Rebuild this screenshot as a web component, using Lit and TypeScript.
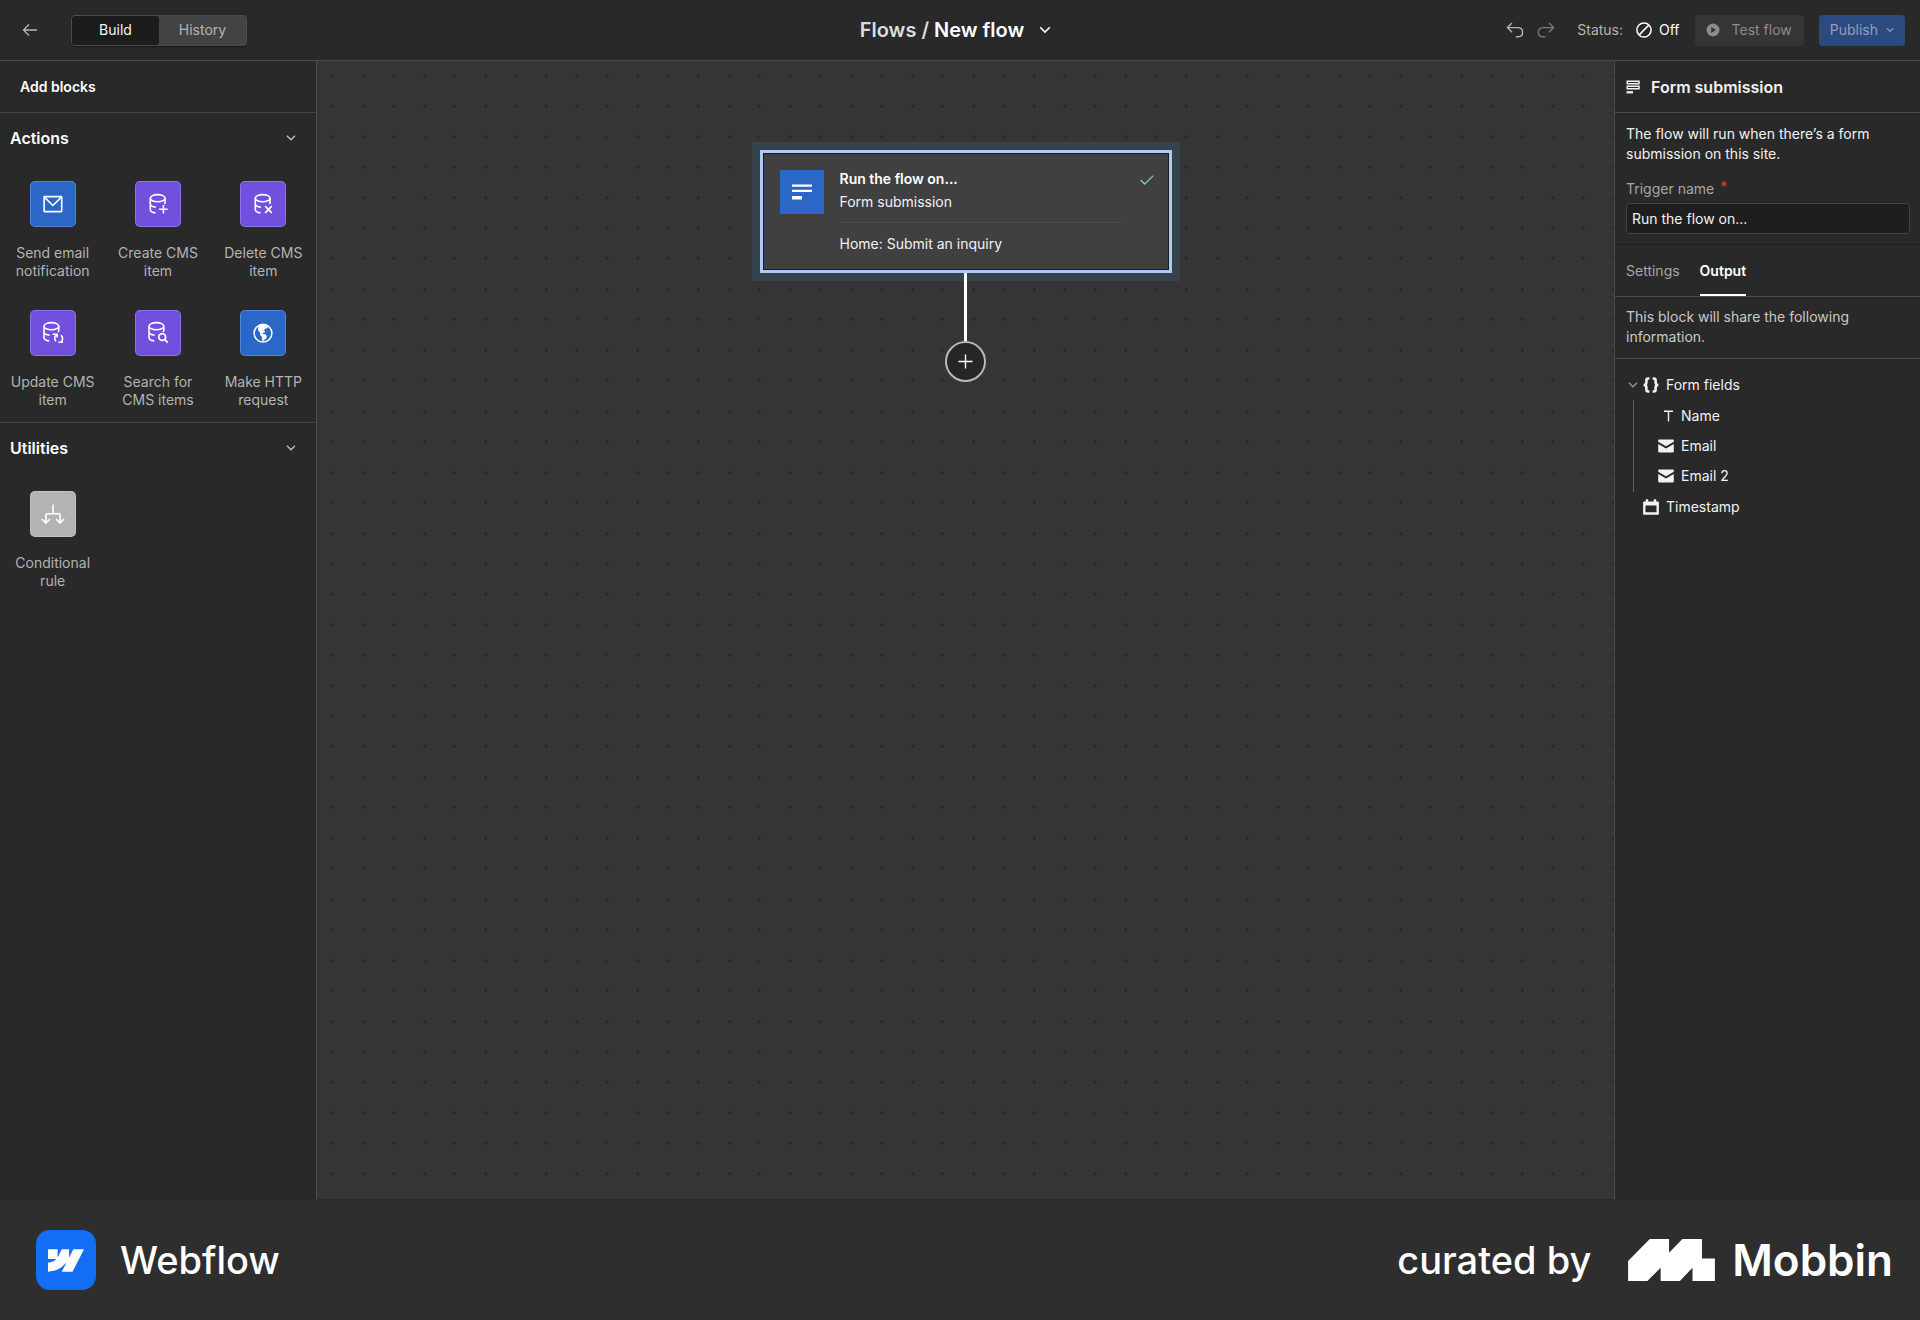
import { LitElement, html, css, svg, type TemplateResult } from "lit";
import { customElement, property, state } from "lit/decorators.js";
import { classMap } from "lit/directives/class-map.js";

const database = svg`
  <ellipse cx="11.7" cy="6.2" rx="7.4" ry="3.6" />
  <path d="M4.3 6.2v11.2c0 1.7 2.2 3 5.2 3.5M4.3 11.9c0 1.6 2.2 2.8 5.6 3.3M19.1 6.2v4.2c0 .5-.3 1-.9 1.5" />`;

const icons: Record<string, TemplateResult> = {
  back: html`<svg width="16" height="14" viewBox="0 0 16 14" fill="none" stroke="currentColor" stroke-width="1.3">
    <path d="M7 1.5 1.5 7 7 12.5M1.5 7H15" /></svg>`,
  chevron: html`<svg width="10" height="6" viewBox="0 0 10 6" fill="none" stroke="currentColor" stroke-width="1.3">
    <path d="M1 .8 5 4.8 9 .8" /></svg>`,
  undo: html`<svg width="18" height="18" viewBox="0 0 18 18" fill="none" stroke="currentColor" stroke-width="1.4">
    <path d="M6 2 1.4 6.6 6 11.2M1.4 6.6h10c3.2 0 5.2 1.9 5.2 4.6s-2 4.6-5.2 4.6H9.8" /></svg>`,
  redo: html`<svg width="18" height="18" viewBox="0 0 18 18" fill="none" stroke="currentColor" stroke-width="1.4">
    <path d="M12 2l4.6 4.6L12 11.2M16.6 6.6h-10c-3.2 0-5.2 1.9-5.2 4.6s2 4.6 5.2 4.6h1.6" /></svg>`,
  off: html`<svg width="16" height="16" viewBox="0 0 16 16" fill="none" stroke="currentColor" stroke-width="1.5">
    <circle cx="8" cy="8" r="7.1" /><path d="M3.4 12.6 12.6 3.4" /></svg>`,
  play: html`<svg width="14" height="14" viewBox="0 0 14 14" fill="currentColor">
    <path fill-rule="evenodd" d="M7 .5a6.5 6.5 0 1 1 0 13a6.5 6.5 0 0 1 0-13zM5.2 3.9v6.2L10 7z" /></svg>`,
  mail: html`<svg width="24" height="24" viewBox="0 0 24 24" fill="none" stroke="currentColor" stroke-width="1.6">
    <rect x="3.1" y="4.6" width="17.6" height="15" rx=".6" /><path d="M3.4 5.1l8.5 8.4 8.5-8.4" /></svg>`,
  dbAdd: html`<svg width="24" height="24" viewBox="0 0 24 24" fill="none" stroke="currentColor" stroke-width="1.6">
    ${database}<path d="M17.4 13v8.6M13.1 17.3h8.6" /></svg>`,
  dbDelete: html`<svg width="24" height="24" viewBox="0 0 24 24" fill="none" stroke="currentColor" stroke-width="1.6">
    ${database}<path d="M14.2 14.2l6.6 6.6M20.8 14.2l-6.6 6.6" stroke-width="1.8" /></svg>`,
  dbUpdate: html`<svg width="24" height="24" viewBox="0 0 24 24" fill="none" stroke="currentColor" stroke-width="1.6">
    <g transform="translate(-1.3 -1)">${database}</g>
    <path d="M11.6 13.2h4.6v3.4M15.400 14c-2 1.600-2.300 4.200-.5 6.200M22 21.200h-4.600M20.200 21c1.900-1.800 1.900-4.900-.2-6.800" /></svg>`,
  dbSearch: html`<svg width="24" height="24" viewBox="0 0 24 24" fill="none" stroke="currentColor" stroke-width="1.6">
    <g transform="translate(-1.3 -1)">${database}</g>
    <circle cx="16.2" cy="16" r="3.4" stroke-width="1.8" /><path d="M18.6 18.4l3.200 3.200" stroke-width="1.8" /></svg>`,
  globe: html`<svg width="24" height="24" viewBox="0 0 24 24" fill="none" stroke="currentColor" stroke-width="1.5">
    <circle cx="12" cy="12.2" r="8.9" />
    <path fill="currentColor" stroke="none" d="M7.600 4.900c2.200-1.600 5.800-2 8.800-.8l1 1.900-1.500 1.400-1.700.2-1.300 1.600 1.300 1-1 1.500-1.700.3.300 1 2.600.2 1.500 1.700-.7 2.500-1.900 1.500-1.200 1.700-1.200-2.100v-2.700l-1.800-1.900.100-2.200-1.900-1.900-.4-2.600z" /></svg>`,
  branch: html`<svg width="24" height="24" viewBox="0 0 24 24" fill="none" stroke="currentColor" stroke-width="1.6">
    <path d="M12 2.600v9.100M4.900 21v-7.700c0-1 .6-1.600 1.600-1.600h11c1 0 1.600.6 1.600 1.600V21M.9 17l4 4 4-4M15.100 17l4 4 4-4" /></svg>`,
  formOutline: html`<svg width="14" height="14" viewBox="0 0 14 14" fill="none" stroke="currentColor" stroke-width="1.4">
    <path d="M1.200 1.200h11.800v2.600H1.200zM1.200 6.200h11.800v2.600H1.200z" /><path d="M.5 12.300h6.500" stroke-width="2.200" /></svg>`,
  check: html`<svg width="14" height="10" viewBox="0 0 14 10" fill="none" stroke="currentColor" stroke-width="1.3">
    <path d="M.7 5l4 4L13.300.6" /></svg>`,
  plus: html`<svg width="15" height="15" viewBox="0 0 15 15" fill="none" stroke="currentColor" stroke-width="1.4">
    <path d="M7.500.5v14M.5 7.500h14" /></svg>`,
  braces: html`<svg width="16" height="16" viewBox="0 0 16 16" fill="none" stroke="currentColor" stroke-width="2.6">
    <path d="M6.400 1.500H5.200C4 1.500 3.400 2.100 3.400 3.200v2.200C3.400 7 2.500 8 .6 8c1.900 0 2.800 1 2.800 2.600v2.200c0 1.100.6 1.700 1.800 1.700h1.200M9.600 1.500h1.200c1.200 0 1.800.6 1.800 1.700v2.200c0 1.600.9 2.600 2.800 2.600-1.900 0-2.800 1-2.800 2.600v2.200c0 1.100-.6 1.700-1.800 1.700H9.600" /></svg>`,
  text: html`<svg width="16" height="16" viewBox="0 0 16 16" fill="none" stroke="currentColor" stroke-width="1.4">
    <path d="M6 3.300h9M10.500 3.300v10.200" /></svg>`,
  envelope: html`<svg width="16" height="16" viewBox="0 0 16 16" fill="currentColor">
    <path d="M1 1.600h14a.8.8 0 0 1 .8.800v1.300L8 8.300.2 3.700V2.400a.8.800 0 0 1 .8-.8zM.2 5.900L8 10.500l7.800-4.600v7.700a.8.800 0 0 1-.8.800H1a.8.800 0 0 1-.8-.8z" /></svg>`,
  calendar: html`<svg width="16" height="16" viewBox="0 0 16 16" fill="currentColor">
    <path fill-rule="evenodd" d="M2.800.3h2.400v2.200h5.600V.3h2.400v2.200h1.800c.5 0 .9.300.9.900v11.300c0 .6-.4 1-.9 1H1c-.5 0-.9-.4-.9-1V3.400c0-.6.4-.9.900-.9h1.800zM2.500 6.400v6.900h11V6.400z" /></svg>`,
  webflow: html`<svg width="36" height="23" viewBox="0 0 1080 674" fill="currentColor" aria-hidden="true">
    <path d="M1080 0L735.386 673.684H411.695L555.916 394.481H549.445C430.464 548.934 252.942 650.61 0 673.684V398.344C0 398.344 161.813 388.787 256.938 288.776H0V0H288.771V237.515L295.252 237.489L413.254 0H631.644V236.009L638.126 235.999L760.555 0H1080Z" /></svg>`,
  mobbin: html`<svg width="87" height="42" viewBox="733 180 248 120" fill="currentColor" aria-hidden="true">
    <path d="M733 243l62-63h55v39l38-39h56v56h37v64h-64v-38l-36 38h-55v-38l-38 38h-55z" /></svg>`,
};

interface Block {
  icon: string;
  tone: "blue" | "purple" | "grey";
  label: string;
}

const sections: { title: string; blocks: Block[] }[] = [
  {
    title: "Actions",
    blocks: [
      { icon: "mail", tone: "blue", label: "Send email notification" },
      { icon: "dbAdd", tone: "purple", label: "Create CMS item" },
      { icon: "dbDelete", tone: "purple", label: "Delete CMS item" },
      { icon: "dbUpdate", tone: "purple", label: "Update CMS item" },
      { icon: "dbSearch", tone: "purple", label: "Search for CMS items" },
      { icon: "globe", tone: "blue", label: "Make HTTP request" },
    ],
  },
  {
    title: "Utilities",
    blocks: [{ icon: "branch", tone: "grey", label: "Conditional rule" }],
  },
];

const base = css`
  * {
    box-sizing: border-box;
  }
  svg {
    display: block;
    flex: none;
  }
  button,
  input {
    font: inherit;
    color: inherit;
    margin: 0;
    padding: 0;
    border: 0;
    background: none;
  }
  button {
    cursor: pointer;
  }
  h1,
  h2,
  p,
  ul {
    margin: 0;
    padding: 0;
    font: inherit;
    list-style: none;
  }
  a {
    color: inherit;
    text-decoration: none;
  }
`;

@customElement("flow-topbar")
export class FlowTopbar extends LitElement {
  @state() private view = "Build";

  static styles = [
    base,
    css`
      :host {
        display: grid;
        grid-template-columns: 1fr auto 1fr;
        align-items: center;
        height: 61px;
        padding: 0 15px 0 22px;
        background: #292929;
        border-bottom: 1px solid #4a4a4a;
        color: #b5b5b5;
      }
      .left,
      .right,
      .title,
      .history,
      .status {
        display: flex;
        align-items: center;
      }
      .left {
        gap: 33px;
      }
      .segments {
        display: flex;
        width: 176px;
        height: 31px;
        border-radius: 4px;
        border: 1px solid #4d4d4d;
        background: #434343;
        box-shadow: 0 1px 1px #161616;
      }
      .segment {
        flex: 1;
        border-radius: 3px;
      }
      .active {
        background: #1c1c1c;
        color: #f5f5f5;
      }
      .title {
        gap: 15px;
        padding-right: 16px;
        font-size: 20px;
        font-weight: 600;
        color: #fff;
      }
      .crumb {
        color: #dcdcdc;
      }
      .right {
        justify-content: flex-end;
        gap: 15px;
      }
      .history {
        gap: 13px;
        padding-right: 7px;
      }
      .redo {
        color: #777;
      }
      .status {
        gap: 7px;
        color: #fff;
      }
      .label {
        color: #b5b5b5;
        padding-right: 6px;
      }
      .action {
        display: flex;
        align-items: center;
        height: 31px;
        border-radius: 4px;
      }
      .test {
        gap: 12px;
        padding: 0 12px 0 11px;
        background: #353535;
        color: #8c8c8c;
      }
      .publish {
        gap: 8px;
        padding: 0 11px;
        background: #2b4a80;
        color: #93a0b8;
      }
      .publish svg {
        width: 8px;
      }
    `,
  ];

  render() {
    return html`
      <div class="left">
        <button aria-label="Back">${icons.back}</button>
        <div class="segments">
          ${["Build", "History"].map(
            (name) => html`<button
              class=${classMap({ segment: true, active: this.view === name })}
              aria-pressed=${this.view === name}
              @click=${() => (this.view = name)}
            >${name}</button>`,
          )}
        </div>
      </div>
      <div class="title">
        <h1><a class="crumb" href="#flows">Flows /</a> New flow</h1>
        <button aria-label="Flow menu">
          <svg width="12" height="8" viewBox="0 0 12 8" fill="none" stroke="currentColor" stroke-width="1.6">
            <path d="M1.200 1.200 6 6l4.800-4.800" />
          </svg>
        </button>
      </div>
      <div class="right">
        <div class="history">
          <button aria-label="Undo">${icons.undo}</button>
          <button class="redo" aria-label="Redo" disabled>${icons.redo}</button>
        </div>
        <div class="status"><span class="label">Status:</span>${icons.off}<span>Off</span></div>
        <button class="action test" disabled>${icons.play}<span>Test flow</span></button>
        <button class="action publish" disabled><span>Publish</span>${icons.chevron}</button>
      </div>
    `;
  }
}

@customElement("block-section")
export class BlockSection extends LitElement {
  @property() heading = "";
  @property({ attribute: false }) blocks: Block[] = [];
  @state() private open = true;

  static styles = [
    base,
    css`
      :host {
        display: block;
        border-top: 1px solid #444;
      }
      .head {
        display: flex;
        align-items: center;
        justify-content: space-between;
        height: 50px;
        padding: 0 20px 0 10px;
        color: #fff;
        font-size: 16px;
        font-weight: 600;
      }
      .toggle {
        color: #c4c4c4;
      }
      .grid {
        display: grid;
        grid-template-columns: repeat(3, 1fr);
        row-gap: 30px;
        padding: 18px 0 13px;
      }
      .block {
        display: flex;
        flex-direction: column;
        align-items: center;
        gap: 17px;
        padding: 0 8px;
        line-height: 18px;
        color: #b3b3b3;
      }
      .tile {
        display: grid;
        place-items: center;
        width: 46px;
        height: 46px;
        border-radius: 5px;
        border: 1px solid #ffffff33;
        color: #fff;
      }
      .blue {
        background: #2a67c7;
      }
      .purple {
        background: #7150dd;
      }
      .grey {
        background: #b3b3b3;
      }
    `,
  ];

  render() {
    return html`
      <div class="head">
        <h2>${this.heading}</h2>
        <button class="toggle" aria-label="Toggle ${this.heading}" aria-expanded=${this.open}
          @click=${() => (this.open = !this.open)}>${icons.chevron}</button>
      </div>
      ${this.open
        ? html`<div class="grid">
            ${this.blocks.map(
              (b) => html`<button class="block">
                <span class="tile ${b.tone}">${icons[b.icon]}</span><span>${b.label}</span>
              </button>`,
            )}
          </div>`
        : null}
    `;
  }
}

@customElement("flow-canvas")
export class FlowCanvas extends LitElement {
  static styles = [
    base,
    css`
      :host {
        --dot: radial-gradient(circle at center, #282828 0 1px, transparent 2px);
        display: flex;
        flex-direction: column;
        align-items: center;
        padding-top: 89px;
        background-color: #353535;
        background-image: var(--dot), var(--dot), var(--dot), var(--dot);
        background-size: 61px 61px;
        background-position: -15px -16px, 16px -16px, -15px 15px, 16px 15px;
        border-bottom: 1px solid #272727;
      }
      .node {
        display: grid;
        grid-template-columns: 44px 1fr 14px;
        column-gap: 16px;
        align-items: start;
        width: 412px;
        padding: 14px 15px 15px 17px;
        border: 3px solid #a9cbf5;
        box-shadow: 0 0 0 8px #37424f, inset 0 0 0 1px #1c1c1c;
        background: #404040;
        color: #f2f2f2;
        text-align: left;
        line-height: 23px;
      }
      .icon {
        display: grid;
        place-items: center;
        height: 44px;
        margin-top: 3px;
        background: #2a67c7;
        color: #fff;
      }
      .name {
        display: block;
        font-weight: 600;
        color: #fff;
      }
      .kind {
        display: block;
        padding-bottom: 9px;
        border-bottom: 1px solid #4d4d4d;
      }
      .detail {
        display: block;
        padding-top: 9px;
      }
      .body {
        padding-right: 2px;
      }
      .check {
        padding-top: 8px;
        color: #7fd094;
      }
      .wire {
        width: 3px;
        height: 68px;
        background: #fff;
      }
      .add {
        display: grid;
        place-items: center;
        width: 41px;
        height: 41px;
        border-radius: 50%;
        border: 2px solid #b8b8b8;
        background: #262626;
        color: #fff;
      }
    `,
  ];

  render() {
    return html`
      <button class="node">
        <span class="icon">
          <svg width="20" height="16" viewBox="0 0 20 16" fill="currentColor">
            <path d="M0 .6h20v2.200H0zM0 5.800h20v2.200H0zM0 12h10v3.400H0z" />
          </svg>
        </span>
        <span class="body">
          <span class="name">Run the flow on...</span>
          <span class="kind">Form submission</span>
          <span class="detail">Home: Submit an inquiry</span>
        </span>
        <span class="check">${icons.check}</span>
      </button>
      <div class="wire"></div>
      <button class="add" aria-label="Add block">${icons.plus}</button>
    `;
  }
}

@customElement("flow-inspector")
export class FlowInspector extends LitElement {
  @state() private tab = "Output";

  static styles = [
    base,
    css`
      :host {
        display: block;
        background: #292929;
        border-left: 1px solid #4a4a4a;
        color: #f2f2f2;
        line-height: 20px;
      }
      .head {
        display: flex;
        align-items: center;
        gap: 11px;
        height: 52px;
        padding: 0 11px;
        border-bottom: 1px solid #4a4a4a;
        font-size: 16px;
        font-weight: 600;
      }
      .trigger {
        padding: 11px 10px 10px 11px;
        border-bottom: 1px solid #1f1f1f;
      }
      .label {
        display: flex;
        gap: 6px;
        padding-top: 15px;
        margin-bottom: 4px;
        color: #a6a6a6;
      }
      .required {
        color: #e0402f;
        line-height: 16px;
      }
      .field {
        display: block;
        width: 100%;
        height: 31px;
        padding: 0 5px;
        border: 1px solid #444;
        border-radius: 4px;
        background: #1e1e1e;
      }
      .tabs {
        display: flex;
        gap: 20px;
        height: 52px;
        padding: 0 11px;
        border-bottom: 1px solid #4a4a4a;
      }
      .tab {
        border-bottom: 2px solid transparent;
        padding-top: 2px;
        color: #a6a6a6;
      }
      .current {
        border-color: #fff;
        color: #fff;
        font-weight: 600;
      }
      .note {
        padding: 10px 11px 11px;
        border-bottom: 1px solid #4a4a4a;
        color: #c9c9c9;
      }
      .tree {
        padding: 11px 13px;
      }
      .row {
        display: flex;
        align-items: center;
        gap: 7px;
        height: 30px;
      }
      .twist {
        width: 10px;
        color: #999;
        margin-right: -2px;
      }
      .children {
        margin-left: 5px;
        padding: 1px 0 1px 24px;
        border-left: 1px solid #5c5c5c;
      }
      .leaf {
        padding-left: 15px;
      }
    `,
  ];

  render() {
    const leaf = (icon: string, name: string) =>
      html`<li class="row">${icons[icon]}<span>${name}</span></li>`;
    return html`
      <div class="head">${icons.formOutline}<h2>Form submission</h2></div>
      <div class="trigger">
        <p>The flow will run when there’s a form submission on this site.</p>
        <label class="label" for="trigger">Trigger name <span class="required">*</span></label>
        <input class="field" id="trigger" type="text" value="Run the flow on..." required />
      </div>
      <div class="tabs" role="tablist">
        ${["Settings", "Output"].map(
          (name) => html`<button role="tab" aria-selected=${this.tab === name}
            class=${classMap({ tab: true, current: this.tab === name })}
            @click=${() => (this.tab = name)}>${name}</button>`,
        )}
      </div>
      <p class="note">This block will share the following information.</p>
      <ul class="tree">
        <li>
          <div class="row">
            <button class="twist" aria-label="Collapse form fields">${icons.chevron}</button>
            ${icons.braces}<span>Form fields</span>
          </div>
          <ul class="children">
            ${leaf("text", "Name")}${leaf("envelope", "Email")}${leaf("envelope", "Email 2")}
          </ul>
        </li>
        <li class="row leaf">${icons.calendar}<span>Timestamp</span></li>
      </ul>
    `;
  }
}

@customElement("brand-footer")
export class BrandFooter extends LitElement {
  static styles = [
    base,
    css`
      :host {
        display: flex;
        align-items: center;
        justify-content: space-between;
        height: 120px;
        padding: 0 27px 0 36px;
        background: #2e2e2e;
        color: #fff;
        font-size: 38px;
        font-weight: 500;
      }
      .brand,
      .credit,
      .mobbin {
        display: flex;
        align-items: center;
      }
      .brand {
        gap: 24px;
      }
      .badge {
        display: grid;
        place-items: center;
        width: 60px;
        height: 60px;
        border-radius: 14px;
        background: #146ef5;
      }
      .credit {
        gap: 37px;
      }
      .mobbin {
        gap: 17px;
        font-size: 44px;
        font-weight: 600;
      }
    `,
  ];

  render() {
    return html`
      <div class="brand"><span class="badge">${icons.webflow}</span><span>Webflow</span></div>
      <div class="credit">
        <span>curated by</span>
        <a class="mobbin" href="#mobbin">${icons.mobbin}<span>Mobbin</span></a>
      </div>
    `;
  }
}

@customElement("app-root")
export class AppRoot extends LitElement {
  static styles = [
    base,
    css`
      :host {
        display: flex;
        flex-direction: column;
        min-height: 100vh;
        font-family: Inter, "Liberation Sans", sans-serif;
        font-size: 14px;
        line-height: 20px;
      }
      .workspace {
        flex: 1;
        display: grid;
        grid-template-columns: 317px 1fr 306px;
      }
      .library {
        background: #292929;
        border-right: 1px solid #4a4a4a;
      }
      .heading {
        display: flex;
        align-items: center;
        height: 51px;
        padding: 0 20px;
        color: #fff;
        font-weight: 600;
      }
    `,
  ];

  render() {
    return html`
      <flow-topbar></flow-topbar>
      <main class="workspace">
        <aside class="library">
          <h1 class="heading">Add blocks</h1>
          ${sections.map(
            (s) => html`<block-section .heading=${s.title} .blocks=${s.blocks}></block-section>`,
          )}
        </aside>
        <flow-canvas></flow-canvas>
        <flow-inspector></flow-inspector>
      </main>
      <brand-footer></brand-footer>
    `;
  }
}
